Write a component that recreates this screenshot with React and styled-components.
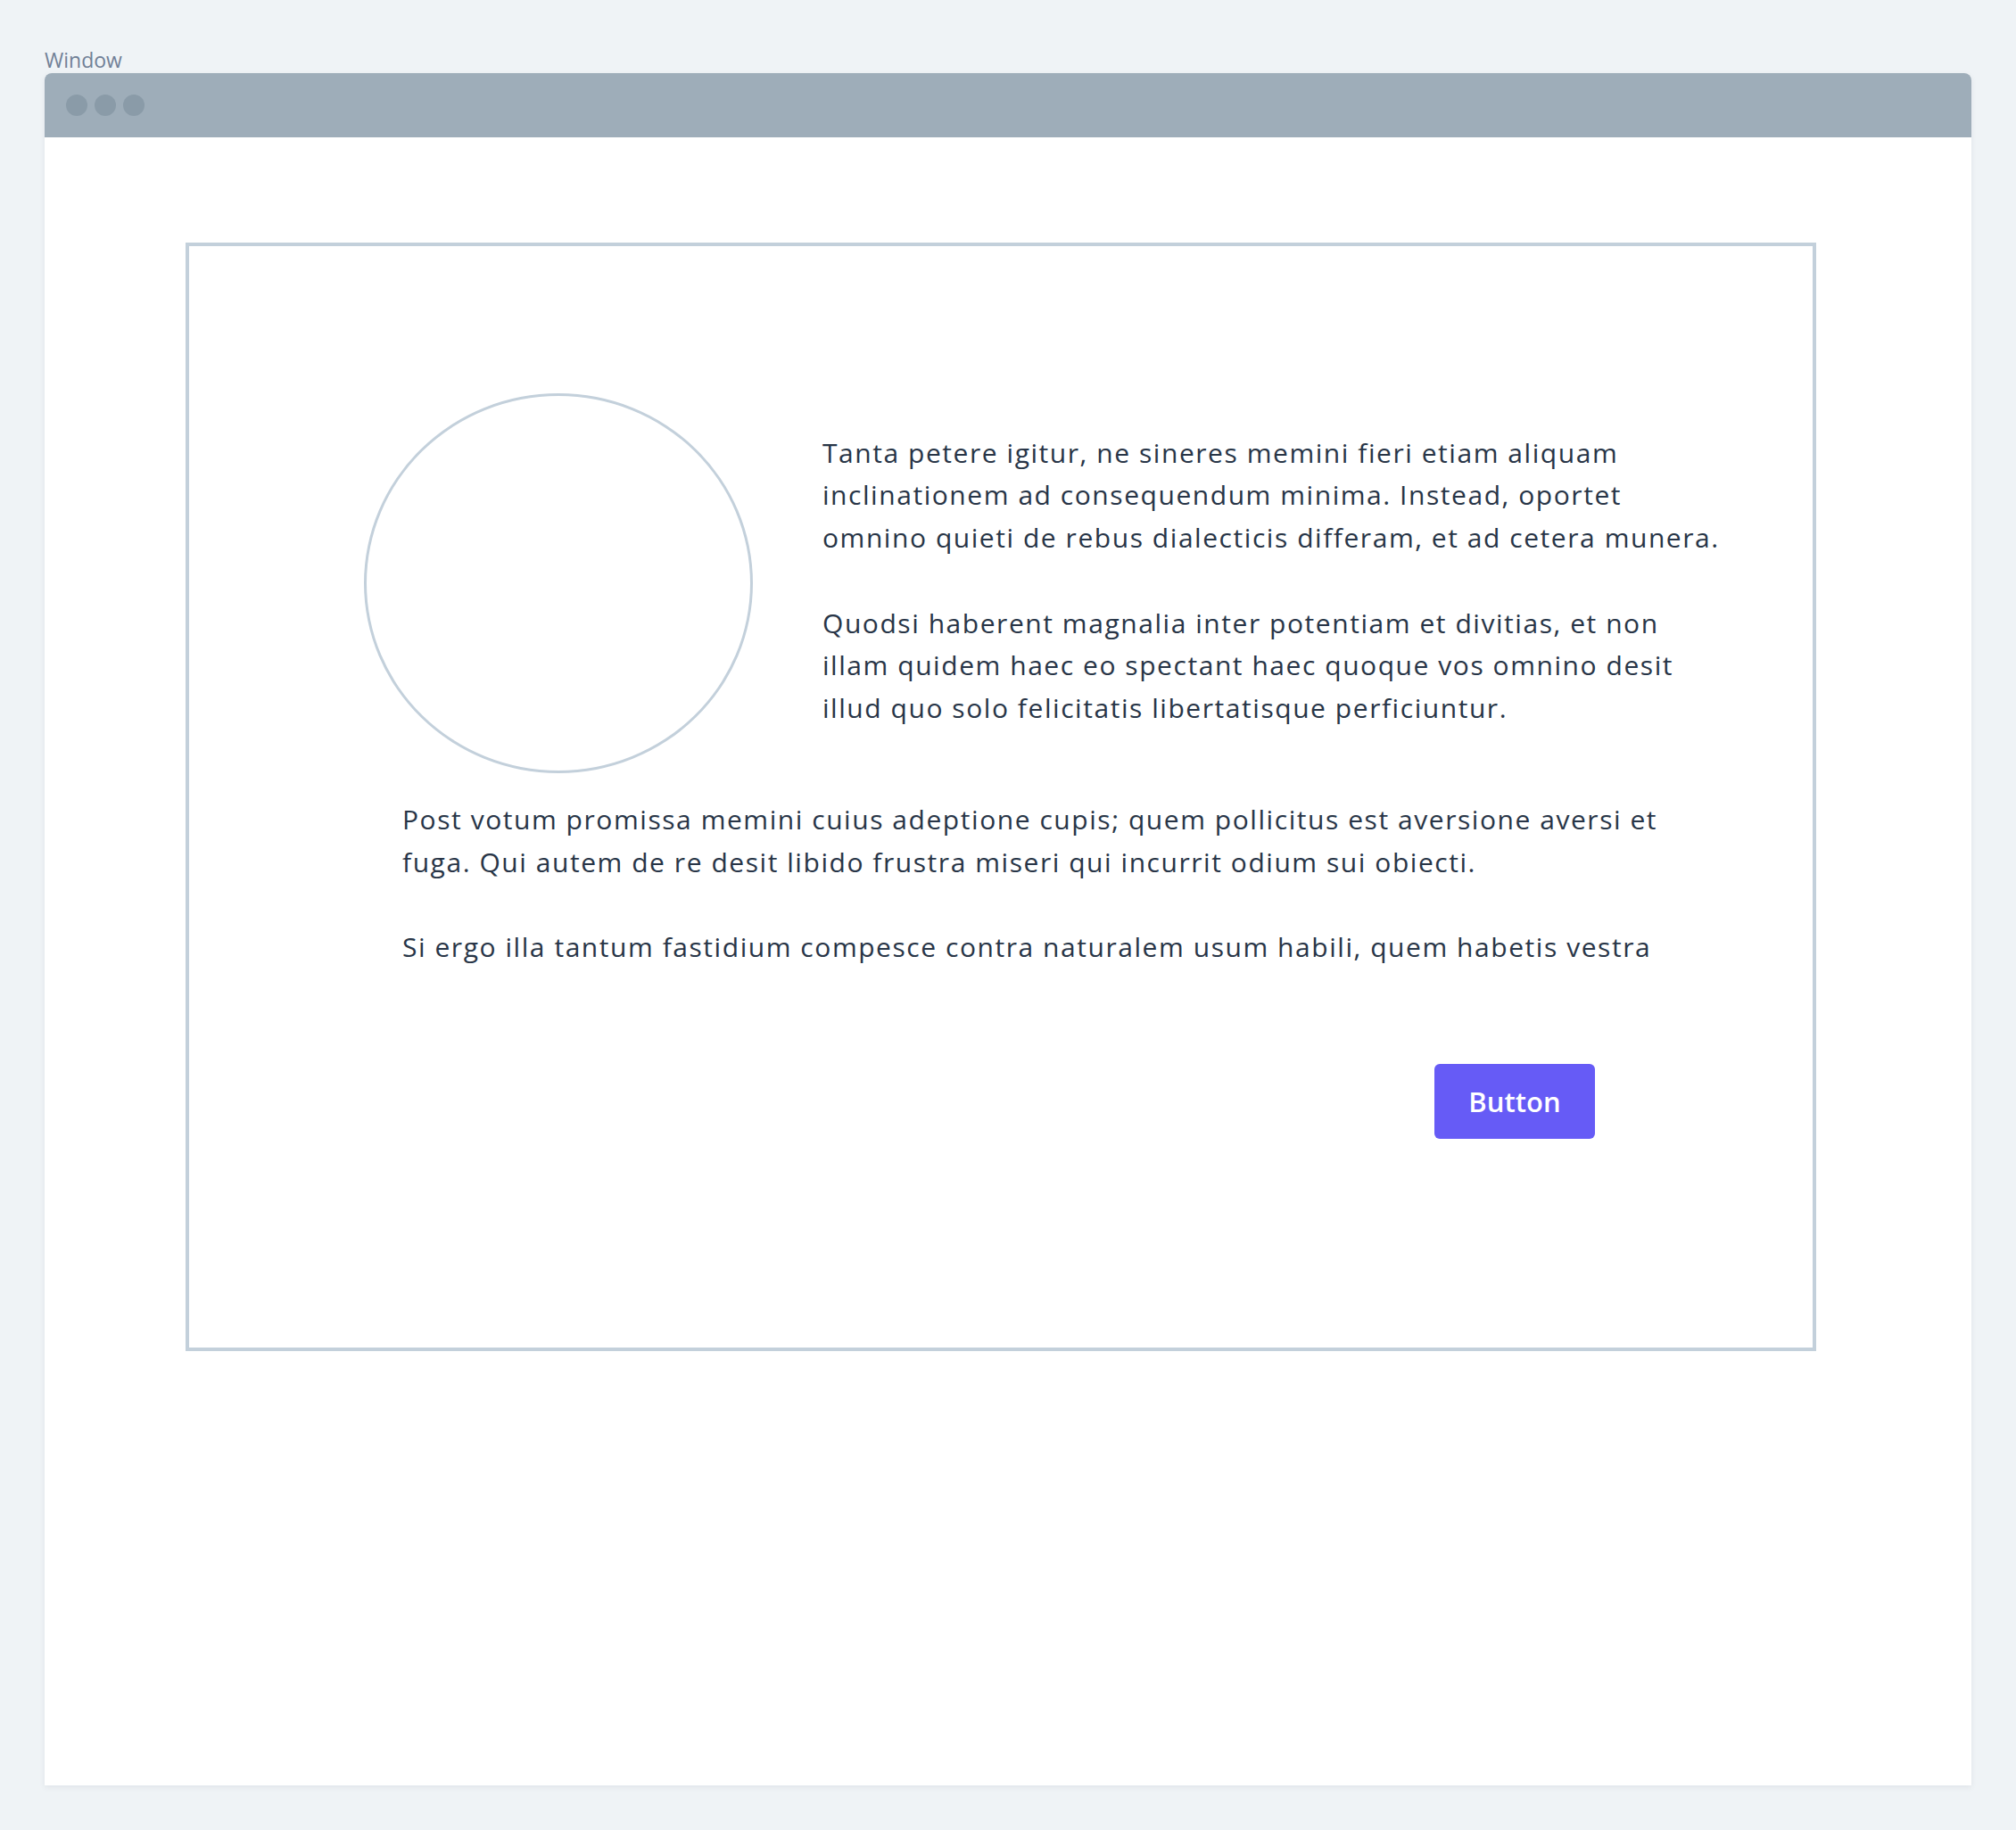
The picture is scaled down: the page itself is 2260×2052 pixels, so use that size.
import styled, { createGlobalStyle } from "styled-components";

const GlobalStyle = createGlobalStyle`
  html, body {
    margin: 0;
    padding: 0;
    background: #eff3f6;
    font-family: "Open Sans", "Noto Sans", sans-serif;
  }
`

const Page = styled.div`
  padding: 52px 50px 50px 50px;
`

const Label = styled.div`
  font-size: 23px;
  line-height: 30px;
  color: #718096;
`

const Window = styled.div`
  background: #ffffff;
  border-radius: 8px 8px 0 0;
  box-shadow: 0 2px 6px rgba(45, 55, 72, 0.08);
  height: 1920px;
  display: flex;
  flex-direction: column;
`

const TitleBar = styled.div`
  height: 72px;
  background: #9eadb9;
  border-radius: 8px 8px 0 0;
  display: flex;
  align-items: center;
  gap: 8px;
  padding-left: 24px;
`

const Dot = styled.span`
  width: 24px;
  height: 24px;
  border-radius: 50%;
  background: #8a9ba8;
`

const Content = styled.div`
  padding: 118px 174px 0 158px;
`

const Frame = styled.div`
  border: 4px solid #c3d0db;
  height: 1243px;
  box-sizing: border-box;
  padding-top: 165px;
`

const TopRow = styled.div`
  display: flex;
  align-items: center;
  gap: 78px;
  padding-left: 196px;
`

// the placeholder is a touch wider than tall in the mockup
const Circle = styled.div`
  width: 436px;
  height: 426px;
  box-sizing: border-box;
  border: 3px solid #c3d0db;
  border-radius: 50%;
  flex-shrink: 0;
`

const TextCol = styled.div`
  display: flex;
  flex-direction: column;
  gap: 48px;
  margin-top: -7px;
`

const Para = styled.p`
  margin: 0;
  font-size: 30px;
  font-weight: 500;
  line-height: 47.6px;
  letter-spacing: 1.55px;
  color: #283547;
  white-space: nowrap;
`

const LowerText = styled.div`
  display: flex;
  flex-direction: column;
  gap: 48px;
  padding-left: 239px;
  margin-top: 28px;
`

const ButtonRow = styled.div`
  display: flex;
  padding-left: 1396px;
  margin-top: 107px;
`

const Button = styled.button`
  width: 180px;
  height: 84px;
  border: none;
  border-radius: 6px;
  background: #665bf6;
  color: #ffffff;
  font-family: "Open Sans", "Noto Sans", sans-serif;
  font-size: 31px;
  font-weight: 600;
`

function App() {
    return (
        <Page>
            <GlobalStyle />
            <Label>Window</Label>
            <Window>
                <TitleBar>
                    <Dot />
                    <Dot />
                    <Dot />
                </TitleBar>
                <Content>
                    <Frame>
                        <TopRow>
                            <Circle />
                            <TextCol>
                                <Para>
                                    Tanta petere igitur, ne sineres memini fieri etiam aliquam<br />
                                    inclinationem ad consequendum minima. Instead, oportet<br />
                                    omnino quieti de rebus dialecticis differam, et ad cetera munera.
                                </Para>
                                <Para>
                                    Quodsi haberent magnalia inter potentiam et divitias, et non<br />
                                    illam quidem haec eo spectant haec quoque vos omnino desit<br />
                                    illud quo solo felicitatis libertatisque perficiuntur.
                                </Para>
                            </TextCol>
                        </TopRow>
                        <LowerText>
                            <Para>
                                Post votum promissa memini cuius adeptione cupis; quem pollicitus est aversione aversi et<br />
                                fuga. Qui autem de re desit libido frustra miseri qui incurrit odium sui obiecti.
                            </Para>
                            <Para>
                                Si ergo illa tantum fastidium compesce contra naturalem usum habili, quem habetis vestra
                            </Para>
                        </LowerText>
                        <ButtonRow>
                            <Button>Button</Button>
                        </ButtonRow>
                    </Frame>
                </Content>
            </Window>
        </Page>
    );
}

export default App;
